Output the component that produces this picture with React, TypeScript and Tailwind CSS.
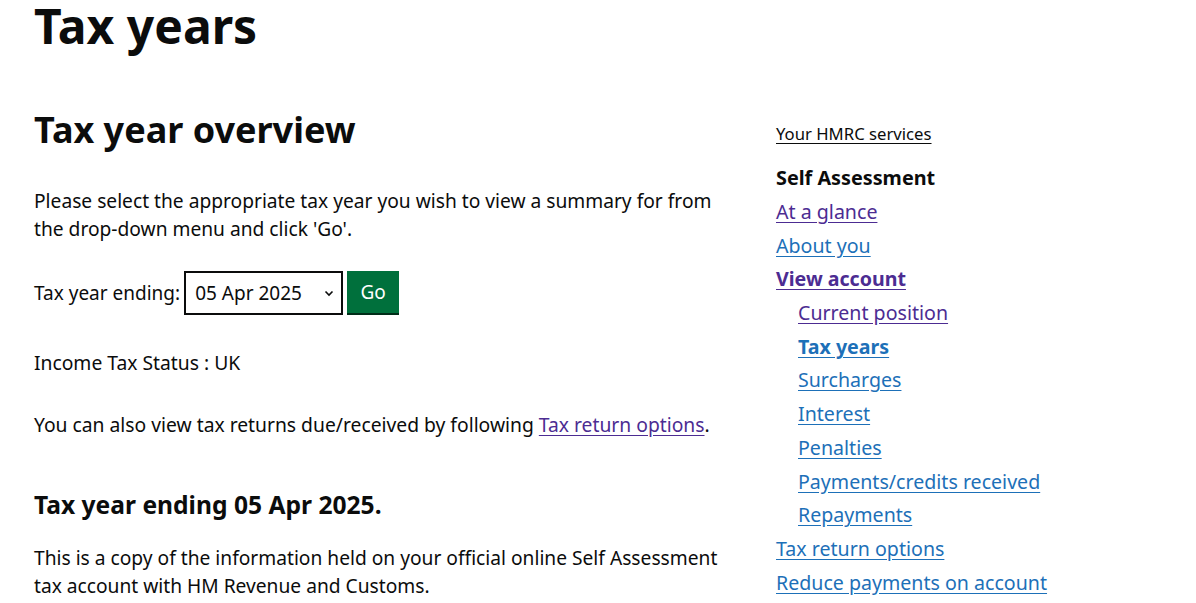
import React from "react";

const font = { fontFamily: '"Noto Sans", Arial, sans-serif' };

export default function App() {
  return (
    <div className="min-h-[603px] bg-white text-[#0b0c0c] overflow-hidden" style={font}>
      <div className="flex px-[34px]">
        <main className="w-[690px] shrink-0">
          <h1 className="text-[48px] leading-[50px] font-bold mt-[1px] mb-[59px]">Tax years</h1>
          <h2 className="text-[36px] leading-[40px] font-bold mb-[37px]">Tax year overview</h2>
          <p className="text-[19.2px] leading-[28px] mb-[28px]">
            Please select the appropriate tax year you wish to view a summary for from the drop-down menu and click 'Go'.
          </p>
          <div className="flex items-start mb-[34px]">
            <label className="text-[19px] leading-[44px] mr-[4px]">Tax year ending:</label>
            <div className="relative w-[159px] h-[44px] border-2 border-[#0b0c0c] flex items-center pl-[9px]">
              <span className="text-[19px]">05 Apr 2025</span>
              <svg className="absolute right-[7px] top-[17px]" width="10" height="7" viewBox="0 0 10 7">
                <path d="M1.5 1.5 L5 5 L8.5 1.5" fill="none" stroke="#0b0c0c" strokeWidth="1.6" />
              </svg>
            </div>
            <button className="ml-[4px] w-[52px] h-[42px] bg-[#00703c] text-white text-[19px] shadow-[0_2px_0_#002d18]">
              Go
            </button>
          </div>
          <p className="text-[19.3px] leading-[28px] mb-[34px]">Income Tax Status : UK</p>
          <p className="text-[19.3px] leading-[28px] mb-[51px]">
            You can also view tax returns due/received by following{" "}
            <a className="text-[#4c2c92] underline underline-offset-[3px]" href="#">Tax return options</a>.
          </p>
          <h3 className="text-[24.6px] leading-[30px] font-bold mb-[24px]">Tax year ending 05 Apr 2025.</h3>
          <p className="text-[19.2px] leading-[28px]">
            This is a copy of the information held on your official online Self Assessment tax account with HM Revenue and Customs.
          </p>
        </main>
        <aside className="ml-[52px] pt-[122px] w-[340px]">
          <a href="#" className="block text-[16.7px] leading-[24px] underline underline-offset-[3px] text-[#0b0c0c] mb-[18px]">
            Your HMRC services
          </a>
          <div className="text-[19.8px] leading-[28px] font-bold mb-[6px]">Self Assessment</div>
          <ul className="text-[19.6px] leading-[28px] flex flex-col gap-[5.7px]">
            <li><a href="#" className="text-[#4c2c92] underline underline-offset-[3px]">At a glance</a></li>
            <li><a href="#" className="text-[#1d70b8] underline underline-offset-[3px]">About you</a></li>
            <li><a href="#" className="text-[#4c2c92] underline underline-offset-[3px] font-bold">View account</a></li>
            <li className="pl-[22px]"><a href="#" className="text-[#4c2c92] underline underline-offset-[3px]">Current position</a></li>
            <li className="pl-[22px]"><a href="#" className="text-[#1d70b8] underline underline-offset-[3px] font-bold">Tax years</a></li>
            <li className="pl-[22px]"><a href="#" className="text-[#1d70b8] underline underline-offset-[3px]">Surcharges</a></li>
            <li className="pl-[22px]"><a href="#" className="text-[#1d70b8] underline underline-offset-[3px]">Interest</a></li>
            <li className="pl-[22px]"><a href="#" className="text-[#1d70b8] underline underline-offset-[3px]">Penalties</a></li>
            <li className="pl-[22px]"><a href="#" className="text-[#1d70b8] underline underline-offset-[3px]">Payments/credits received</a></li>
            <li className="pl-[22px]"><a href="#" className="text-[#1d70b8] underline underline-offset-[3px]">Repayments</a></li>
            <li><a href="#" className="text-[#1d70b8] underline underline-offset-[3px]">Tax return options</a></li>
            <li><a href="#" className="text-[#1d70b8] underline underline-offset-[3px]">Reduce payments on account</a></li>
          </ul>
        </aside>
      </div>
    </div>
  );
}
